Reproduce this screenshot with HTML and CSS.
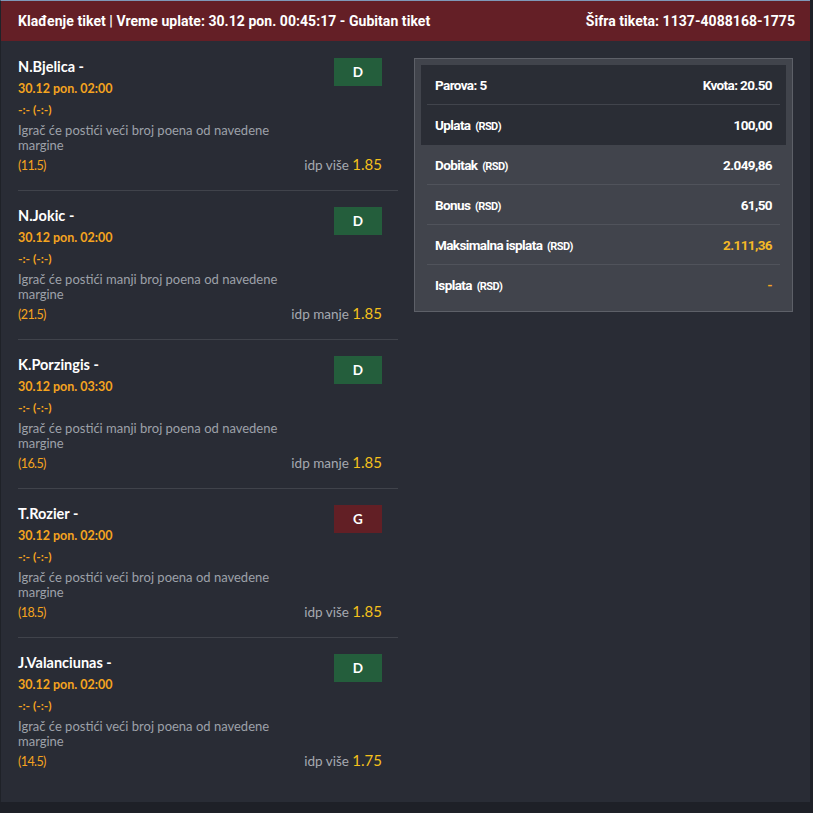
FILE: index.html
```html
<!DOCTYPE html>
<html>
<head>
    <title>Tiket</title>
    <meta charset="utf-8">
    <link rel="stylesheet" href="styles.css">
</head>
<body>
<main class="ticket">
    <header class="ticket-header">
        <span>Klađenje tiket | Vreme uplate: 30.12 pon. 00:45:17 - Gubitan tiket</span>
        <span>Šifra tiketa: 1137-4088168-1775</span>
    </header>

    <div class="ticket-body">
        <section class="pairs">
            <div class="pair">
                <div class="pair-name">N.Bjelica -</div>
                <div class="badge badge-win">D</div>
                <div class="pair-date">30.12 pon. 02:00</div>
                <div class="pair-score">-:- (-:-)</div>
                <div class="pair-desc">Igrač će postići veći broj poena od navedene margine</div>
                <div class="pair-foot">
                    <span class="pair-margin">(11.5)</span>
                    <span class="pair-tip">idp više <b>1.85</b></span>
                </div>
            </div>

            <div class="pair">
                <div class="pair-name">N.Jokic -</div>
                <div class="badge badge-win">D</div>
                <div class="pair-date">30.12 pon. 02:00</div>
                <div class="pair-score">-:- (-:-)</div>
                <div class="pair-desc">Igrač će postići manji broj poena od navedene margine</div>
                <div class="pair-foot">
                    <span class="pair-margin">(21.5)</span>
                    <span class="pair-tip">idp manje <b>1.85</b></span>
                </div>
            </div>

            <div class="pair">
                <div class="pair-name">K.Porzingis -</div>
                <div class="badge badge-win">D</div>
                <div class="pair-date">30.12 pon. 03:30</div>
                <div class="pair-score">-:- (-:-)</div>
                <div class="pair-desc">Igrač će postići manji broj poena od navedene margine</div>
                <div class="pair-foot">
                    <span class="pair-margin">(16.5)</span>
                    <span class="pair-tip">idp manje <b>1.85</b></span>
                </div>
            </div>

            <div class="pair">
                <div class="pair-name">T.Rozier -</div>
                <div class="badge badge-lose">G</div>
                <div class="pair-date">30.12 pon. 02:00</div>
                <div class="pair-score">-:- (-:-)</div>
                <div class="pair-desc">Igrač će postići veći broj poena od navedene margine</div>
                <div class="pair-foot">
                    <span class="pair-margin">(18.5)</span>
                    <span class="pair-tip">idp više <b>1.85</b></span>
                </div>
            </div>

            <div class="pair pair-last">
                <div class="pair-name">J.Valanciunas -</div>
                <div class="badge badge-win">D</div>
                <div class="pair-date">30.12 pon. 02:00</div>
                <div class="pair-score">-:- (-:-)</div>
                <div class="pair-desc">Igrač će postići veći broj poena od navedene margine</div>
                <div class="pair-foot">
                    <span class="pair-margin">(14.5)</span>
                    <span class="pair-tip">idp više <b>1.75</b></span>
                </div>
            </div>
        </section>

        <aside class="summary">
            <div class="summary-top">
                <div class="summary-row">
                    <span>Parova: 5</span>
                    <span>Kvota: 20.50</span>
                </div>
                <div class="summary-row">
                    <span>Uplata <small>(RSD)</small></span>
                    <span>100,00</span>
                </div>
            </div>
            <div class="summary-row">
                <span>Dobitak <small>(RSD)</small></span>
                <span>2.049,86</span>
            </div>
            <div class="summary-row">
                <span>Bonus <small>(RSD)</small></span>
                <span>61,50</span>
            </div>
            <div class="summary-row">
                <span>Maksimalna isplata <small>(RSD)</small></span>
                <span class="value-gold">2.111,36</span>
            </div>
            <div class="summary-row">
                <span>Isplata <small>(RSD)</small></span>
                <span class="value-orange">-</span>
            </div>
        </aside>
    </div>
</main>
</body>
</html>
```

FILE: styles.css
```css
body {
    margin: 0;
    background-color: #1e2027;
    font-family: Lato, "Open Sans", sans-serif;
}

.ticket {
    width: 809px;
    min-height: 801px;
    background-color: #292c35;
    border-top: 1px solid #7f98b8;
    border-left: 1px solid #1f2228;
}

.ticket-header {
    display: flex;
    justify-content: space-between;
    align-items: center;
    height: 40px;
    padding: 0 15px 0 17px;
    background-color: #641f26;
    color: #ffffff;
    font-family: Roboto, "Liberation Sans", sans-serif;
    font-size: 14px;
    font-weight: bold;
    letter-spacing: 0.05px;
}

.ticket-body {
    display: flex;
    align-items: flex-start;
}

/* left column */
.pairs {
    width: 380px;
    margin: 1px 0 0 17px;
}

.pair {
    box-sizing: border-box;
    display: grid;
    grid-template-columns: 1fr 48px;
    align-content: start;
    height: 149px;
    padding: 15px 16px 0 0;
    border-bottom: 1px solid #40434b;
}

.pair > div {
    grid-column: 1;
}

.pair-last {
    border-bottom: none;
}

.pair-name {
    grid-row: 1;
    color: #ffffff;
    font-size: 14.5px;
    font-weight: bold;
    line-height: 20px;
}

.pair-date {
    margin-top: 2px;
    color: #f5a41f;
    font-size: 12.5px;
    font-weight: bold;
    line-height: 20px;
}

.pair-score {
    margin-top: 1px;
    color: #f5a41f;
    font-size: 12px;
    font-weight: bold;
    line-height: 20px;
}

.pair-desc {
    max-width: 265px;
    margin-top: 3px;
    color: #9da1a9;
    font-size: 13px;
    line-height: 15px;
}

.pair > .pair-foot {
    grid-column: 1 / -1;
    display: flex;
    justify-content: space-between;
    align-items: baseline;
    height: 18px;
    margin-top: 2px;
    line-height: 18px;
}

.pair-margin {
    color: #f5a41f;
    font-size: 12.5px;
    letter-spacing: -0.6px;
}

.pair-tip {
    color: #a6a9b0;
    font-size: 13.5px;
}

.pair-tip b {
    color: #f5c11c;
    font-size: 15px;
    font-weight: normal;
}

.pair > .badge {
    grid-column: 2;
    grid-row: 1 / 3;
    align-self: start;
    height: 28px;
    margin-top: 1px;
    color: #ffffff;
    font-size: 13.5px;
    font-weight: bold;
    line-height: 28px;
    text-align: center;
}

.badge-win {
    background-color: #245e3c;
}

.badge-lose {
    background-color: #621f25;
}

/* right summary box */
.summary {
    width: 365px;
    margin: 17px 0 0 16px;
    padding: 6px;
    background-color: #41444c;
    border: 1px solid #5d6068;
    color: #ffffff;
    font-family: Roboto, "Liberation Sans", sans-serif;
    font-size: 13.5px;
    font-weight: bold;
    letter-spacing: -0.6px;
}

.summary-top {
    background-color: #2a2d35;
}

.summary-row {
    display: flex;
    justify-content: space-between;
    align-items: center;
    height: 39px;
    margin: 0 6px;
    padding: 0 8px;
    border-bottom: 1px solid #50535b;
}

.summary-top .summary-row {
    border-bottom-color: #41444c;
}

.summary-row:last-child {
    border-bottom-color: transparent;
}

.summary-row small {
    font-size: 11px;
    margin-left: 2px;
}

.value-gold {
    color: #f5b926;
}

.value-orange {
    color: #f5a41f;
}
```
